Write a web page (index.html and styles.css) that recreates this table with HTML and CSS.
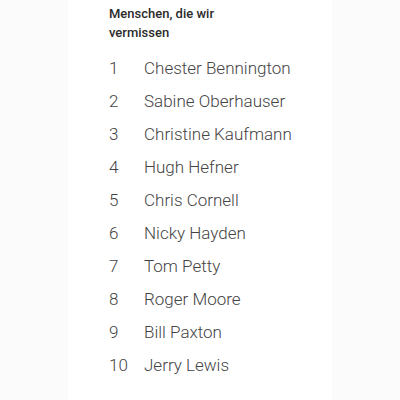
FILE: index.html
```html
<!DOCTYPE html>
<html lang="de">
<head>
<meta charset="utf-8">
<link rel="stylesheet" href="styles.css">
</head>
<body>
<main class="card">
  <h2 class="title">Menschen, die wir<br>vermissen</h2>
  <ol class="list">
    <li class="row"><span class="num">1</span><span class="name">Chester Bennington</span></li>
    <li class="row"><span class="num">2</span><span class="name">Sabine Oberhauser</span></li>
    <li class="row"><span class="num">3</span><span class="name">Christine Kaufmann</span></li>
    <li class="row"><span class="num">4</span><span class="name">Hugh Hefner</span></li>
    <li class="row"><span class="num">5</span><span class="name">Chris Cornell</span></li>
    <li class="row"><span class="num">6</span><span class="name">Nicky Hayden</span></li>
    <li class="row"><span class="num">7</span><span class="name">Tom Petty</span></li>
    <li class="row"><span class="num">8</span><span class="name">Roger Moore</span></li>
    <li class="row"><span class="num">9</span><span class="name">Bill Paxton</span></li>
    <li class="row"><span class="num">10</span><span class="name">Jerry Lewis</span></li>
  </ol>
</main>
</body>
</html>
```
FILE: styles.css
```css
html, body {
  margin: 0;
  padding: 0;
  background: #fcfbfc;
  font-family: Roboto, "Liberation Sans", sans-serif;
}
.card {
  width: 264px;
  height: 400px;
  margin: 0 auto;
  background: #ffffff;
  padding: 4px 0 0 41px;
  box-sizing: border-box;
}
.title {
  margin: 0;
  font-size: 13px;
  font-weight: 500;
  line-height: 19px;
  color: #2b2b2b;
}
.list {
  list-style: none;
  margin: 10px 0 0 0;
  padding: 0;
}
.row {
  display: grid;
  grid-template-columns: 35px auto;
  font-size: 17px;
  font-weight: 300;
  line-height: 33px;
  color: #444444;
}
```
